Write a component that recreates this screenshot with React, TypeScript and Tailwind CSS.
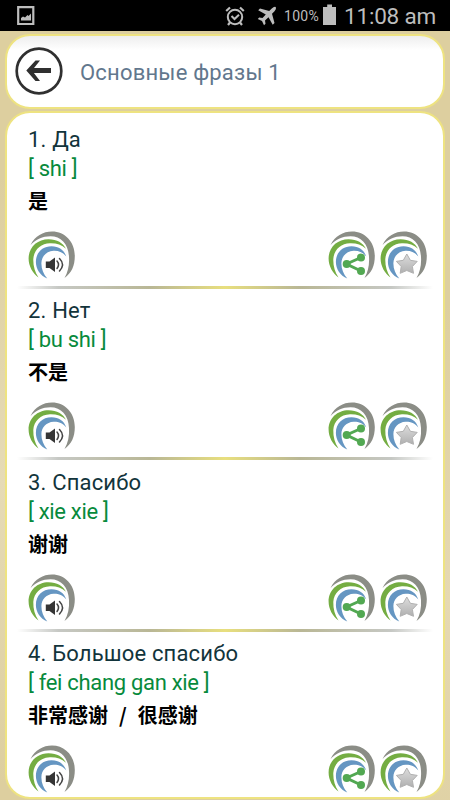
import React from 'react'

const phrases = [
  { id: 1, title: 'Да', pinyin: 'shi', hanzi: '是' },
  { id: 2, title: 'Нет', pinyin: 'bu shi', hanzi: '不是' },
  { id: 3, title: 'Спасибо', pinyin: 'xie xie', hanzi: '谢谢' },
  { id: 4, title: 'Большое спасибо', pinyin: 'fei chang gan xie', hanzi: '非常感谢 / 很感谢' },
]

const ArcButton: React.FC<{ label: string; children: React.ReactNode }> = ({ label, children }) => (
  <button aria-label={label} className="block h-12 w-12">
    <svg viewBox="0 0 48 48" className="h-12 w-12">
      <path d="M2.500 14C7 5 15 .5 24 .5C37 .5 46.800 11 46.800 25C46.800 35 43.500 42 36.500 47C40 41 41.500 34 41 26C40.500 13 33 5.200 22.500 5.200C14.500 5.200 8 8.500 2.500 14Z" fill="#8b8d86" />
      <path d="M10.500 46.500C4.500 42 .6 35 .6 27.500C.6 16 9.500 8.200 20.500 8.200C29 8.200 35 11.800 38 17.700C33.500 13.800 28.500 12 22 12.200C12.500 12.500 5.900 19 5.300 28C5.100 35 6.800 41 10.500 46.500Z" fill="#74ad42" />
      <path d="M19.300 47.500C12 44.500 7.900 38 7.900 31C7.900 21.500 14.500 15.300 23.500 15.300C31 15.300 36 19 38.300 25.500C34.500 21 30.500 19.600 25.500 19.800C18.500 20.200 13.500 25.500 13.400 32C13.300 38 15.500 43 19.300 47.500Z" fill="#6596c2" />
      {children}
    </svg>
  </button>
)

const SpeakerGlyph: React.FC = () => (
  <>
    <path d="M17.800 30.500H21.500L27 26.500V41L21.500 37H17.800Z" fill="#353535" />
    <path d="M29 30Q32 33.500 29 37.500M31.500 27.500Q37.500 33.500 31.500 40" fill="none" stroke="#444" strokeWidth="1.500" strokeLinecap="round" />
  </>
)

const ShareGlyph: React.FC = () => (
  <g fill="#52a852">
    <path d="M33 26.500L18.500 33L33 40" fill="none" stroke="#52a852" strokeWidth="3" />
    <circle cx="33" cy="26.500" r="4" />
    <circle cx="18.700" cy="33" r="4" />
    <circle cx="33" cy="40" r="4" />
  </g>
)

const StarGlyph: React.FC = () => (
  <>
    <defs>
      <linearGradient id="silver" x1="0" y1="0" x2="0" y2="1">
        <stop offset="0" stopColor="#dddddd" />
        <stop offset="1" stopColor="#b0b0b0" />
      </linearGradient>
    </defs>
    <path
      d="M26.800 23L30.400 29.300L37.200 30.400L32.400 35.500L33.500 42.300L26.800 39.500L20.200 42.300L21.200 35.500L16.400 30.400L23.300 29.300Z"
      fill="url(#silver)"
      stroke="#b0b0b0"
      strokeWidth="1"
      strokeLinejoin="round"
    />
  </>
)

const StatusBar: React.FC = () => (
  <div className="flex h-[31px] shrink-0 items-center bg-black pl-[17px] text-[#bdbdbd]">
    <svg viewBox="0 0 18 20" className="mt-px h-[20px] w-[18px]">
      <path d="M1.200 1.200H16.300V18H1.200Z" fill="none" stroke="currentColor" strokeWidth="2.200" />
      <path d="M4 14.500V12L6 10.500L8 11.500L10.500 9L11.500 10L14 7.500V14.500Z" fill="currentColor" />
    </svg>
    <svg viewBox="0 0 20 20" className="ml-[190px] h-5 w-5" fill="none" stroke="currentColor">
      <circle cx="10" cy="11" r="7.200" strokeWidth="2" />
      <path d="M1.200 5L5 1.500M15 1.500L18.800 5M5 16.500L3 19M15 16.500L17 19" strokeWidth="2.200" />
      <path d="M6.500 10L9.500 13L14 8.700" strokeWidth="2" />
    </svg>
    <svg viewBox="0 0 20 20" className="ml-[12px] h-5 w-5" fill="currentColor">
      <path d="M18.800 1Q17 .3 14.800 2.500L12.200 5L3 2.500L1.200 4.300L8.800 8.500L5.500 12L2.200 11.500L.8 13L5 15L7 19.200L8.500 17.800L8 14.500L11.500 11.200L15.700 18.800L17.500 17L15 7.800L17.500 5.200Q19.700 3 18.800 1Z" />
    </svg>
    <span className="ml-[7px] mt-[2px] w-[37px] whitespace-nowrap text-[14px] tracking-[.3px]">100%</span>
    <svg viewBox="0 0 13 21" className="ml-[2px] mt-[-2px] h-[21px] w-[13px]" fill="currentColor">
      <path d="M4.200 .5H9V3H13V21H0V3H4.200Z" />
    </svg>
    <span className="ml-[8px] mt-[2px] whitespace-nowrap text-[22.500px] leading-none tracking-[-.2px]">11:08 am</span>
  </div>
)

const PhraseRow: React.FC<{ phrase: (typeof phrases)[number]; last: boolean }> = ({ phrase, last }) => (
  <li className="h-[171.300px] shrink-0">
    <div className="px-[21px] pt-[12px]">
      <div className="h-[29px] text-[22px] leading-[29px] tracking-[.17px] text-[#12343b]">
        {phrase.id}. {phrase.title}
      </div>
      <div className="h-[29px] text-[22px] leading-[29px] tracking-[-.31px] text-[#078a3c]">[ {phrase.pinyin} ]</div>
      <div className="mt-[3px] h-[30px] font-['Noto_Sans_CJK_SC',sans-serif] text-[20px] font-bold leading-[30px] text-black [word-spacing:6.500px]">
        {phrase.hanzi}
      </div>
    </div>
    <div className="mt-[15px] flex px-[21px]">
      <ArcButton label="Прослушать">
        <SpeakerGlyph />
      </ArcButton>
      <div className="ml-auto mr-[-6px] flex gap-[4px]">
        <ArcButton label="Поделиться">
          <ShareGlyph />
        </ArcButton>
        <ArcButton label="В избранное">
          <StarGlyph />
        </ArcButton>
      </div>
    </div>
    {!last && (
      <div className="mx-[10px] mt-[7px] h-[3px] bg-[linear-gradient(90deg,#ffffff00_0%,#c6c8c4_10%,#b9b795_32%,#e8df7e_50%,#b9b795_68%,#c6c8c4_90%,#ffffff00_100%)]" />
    )}
  </li>
)

const App: React.FC = () => {
  return (
    <div className="flex h-[800px] w-[450px] flex-col overflow-hidden bg-[#ddcf9f] bg-[radial-gradient(ellipse_at_0%_60%,#e6dbb6_0%,transparent_45%),radial-gradient(ellipse_at_100%_75%,#e6d9b3_0%,transparent_35%)] font-[Roboto,sans-serif]">
      <StatusBar />

      {/* Header */}
      <header className="mx-[5px] mt-[3px] flex h-[75px] shrink-0 items-center rounded-[25px] border-2 border-[#eee381] bg-[linear-gradient(#eeeeee,#fff_14px)] pl-[8px]">
        <button aria-label="Назад" className="mb-[2px] block h-12 w-12">
          <svg viewBox="0 0 48 48" className="h-12 w-12" fill="none" stroke="#303030">
            <circle cx="24" cy="24" r="22.300" strokeWidth="2.700" />
            <path d="M36 23.500H15" strokeWidth="5" />
            <path d="M25 13.500H20.500L11.300 23.500L20.500 34H25L17 23.500Z" fill="#303030" stroke="none" />
          </svg>
        </button>
        <h1 className="ml-[17px] mt-px whitespace-nowrap text-[22px] tracking-[.2px] text-[#62778d]">Основные фразы 1</h1>
      </header>

      {/* Phrase list */}
      <ul className="mx-[5px] mb-px mt-[2px] flex min-h-0 flex-1 flex-col overflow-hidden rounded-[25px] border-2 border-[#eee381] bg-white">
        {phrases.map((phrase, index) => (
          <PhraseRow key={phrase.id} phrase={phrase} last={index === phrases.length - 1} />
        ))}
      </ul>
    </div>
  )
}

export default App
